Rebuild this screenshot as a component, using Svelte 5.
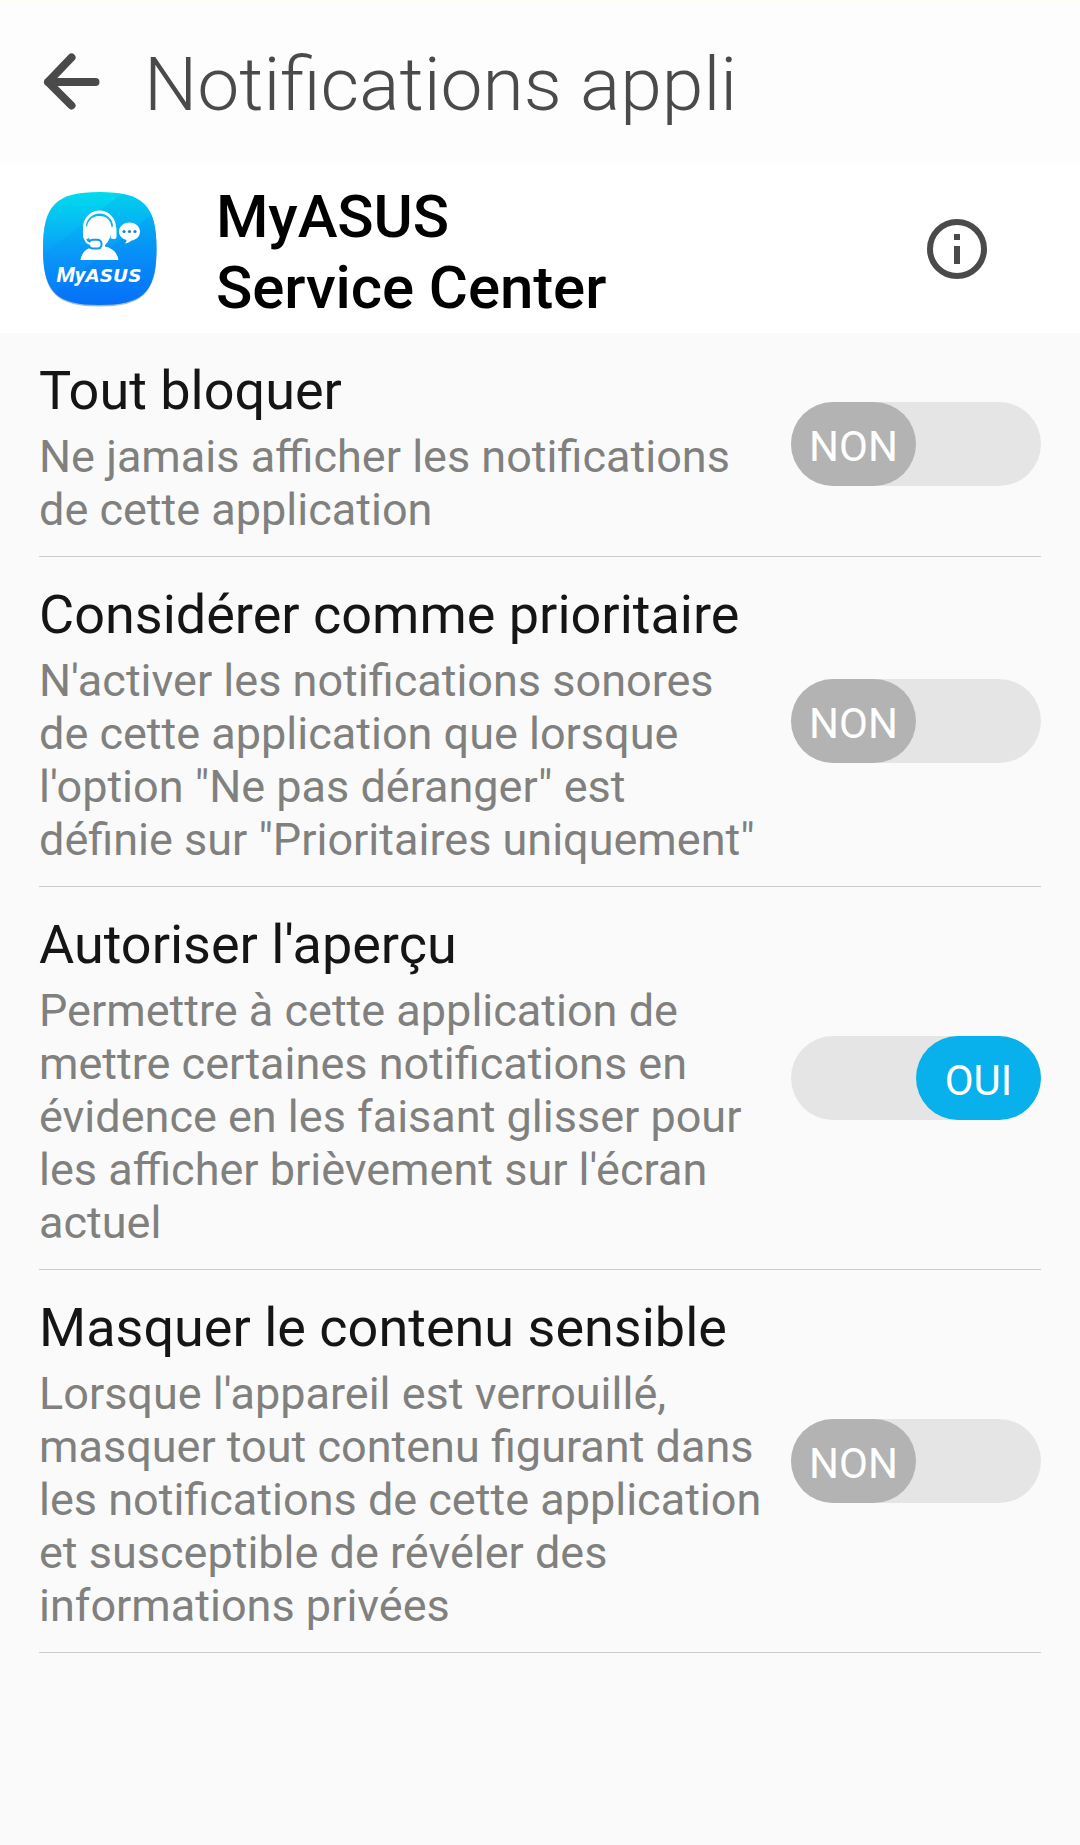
<script>
  let items = $state([
    {
      title: 'Tout bloquer',
      lines: ['Ne jamais afficher les notifications', 'de cette application'],
      on: false
    },
    {
      title: 'Considérer comme prioritaire',
      lines: [
        "N'activer les notifications sonores",
        'de cette application que lorsque',
        'l\'option "Ne pas déranger" est',
        'définie sur "Prioritaires uniquement"'
      ],
      on: false
    },
    {
      title: "Autoriser l'aperçu",
      lines: [
        'Permettre à cette application de',
        'mettre certaines notifications en',
        'évidence en les faisant glisser pour',
        "les afficher brièvement sur l'écran",
        'actuel'
      ],
      on: true
    },
    {
      title: 'Masquer le contenu sensible',
      lines: [
        "Lorsque l'appareil est verrouillé,",
        'masquer tout contenu figurant dans',
        'les notifications de cette application',
        'et susceptible de révéler des',
        'informations privées'
      ],
      on: false
    }
  ]);
</script>

<div class="screen">
  <header class="bar">
    <svg class="back" width="60" height="60" viewBox="0 0 60 60" aria-hidden="true">
      <path d="M31.5 6.500 8 31 31.500 54.500M8 31H55.500" />
    </svg>
    <h1>Notifications appli</h1>
  </header>

  <section class="app">
    <svg class="logo" width="124" height="124" viewBox="0 0 124 124" aria-hidden="true">
      <defs>
        <linearGradient id="sky" x1="0" y1="0" x2="0" y2="1">
          <stop offset="0" stop-color="#00dcec" />
          <stop offset="0.28" stop-color="#06bcf4" />
          <stop offset="0.6" stop-color="#0a98f8" />
          <stop offset="1" stop-color="#0874fb" />
        </linearGradient>
        <clipPath id="tile">
          <path d="M62.500 5C106 5 119.500 18 119.500 61.500S106 118 62.500 118 6 105 6 61.500 19 5 62.500 5Z" />
        </clipPath>
      </defs>
      <path
        d="M62.500 6.500C106 6.500 119.500 19 119.500 62.500S106 119.500 62.500 119.500 6 106 6 62.500 19 6.500 62.500 6.500Z"
        fill="#6f9fc4"
        opacity="0.7"
      />
      <path
        d="M62.500 5C106 5 119.500 18 119.500 61.500S106 118 62.500 118 6 105 6 61.500 19 5 62.500 5Z"
        fill="url(#sky)"
      />
      <g clip-path="url(#tile)">
        <path d="M0 72 78 12 124 -20V124H0Z" fill="#0878f8" opacity="0.13" />
        <path d="M0 120 124 20V124H0Z" fill="#0058f0" opacity="0.13" />
      </g>
      <path
        d="M62.500 29c-8 0-12.500 5.500-12.500 12.500 0 7 3 13 7 16.500v1.500c-7 1.500-12.500 6-13.500 13.500H81.500c-1-7.500-6.500-12-13.500-13.500V58c4-3.500 6.500-9.500 6.500-16.500C74.500 34.500 70.500 29 62.500 29Z"
        fill="#fff"
      />
      <path d="M47.500 44V40a15 15 0 0 1 30 0V44" fill="none" stroke="#fff" stroke-width="2.800" />
      <rect x="46" y="39.500" width="6" height="12.500" rx="2.500" fill="#fff" />
      <rect x="73.500" y="39.500" width="6" height="12.500" rx="2.500" fill="#fff" />
      <rect x="51" y="51.800" width="14.500" height="10.800" rx="5" fill="#0a9df5" />
      <path d="M48 50c0 4.500 3 7 7 7" fill="none" stroke="#fff" stroke-width="2.200" />
      <rect x="53" y="53.800" width="10.500" height="6.800" rx="3" fill="#fff" />
      <path
        d="M92.500 35.500c6 0 10.500 4 10.500 9s-4 8.500-8.500 9c-1 1-3 2.500-6.500 3 1-1.500 1.500-2 1.500-3.500-4-1-7.500-4-7.500-8.500 0-5 4.500-9 10.500-9Z"
        fill="#fff"
      />
      <g fill="#1388d8">
        <circle cx="87" cy="44.500" r="1.600" />
        <circle cx="92.500" cy="44.500" r="1.600" />
        <circle cx="98" cy="44.500" r="1.600" />
      </g>
      <text class="wordmark" x="19.500" y="94.500" textLength="85" lengthAdjust="spacingAndGlyphs"
        ><tspan class="my">My</tspan><tspan class="asus">ASUS</tspan></text
      >
    </svg>
    <div class="name">MyASUS<br />Service Center</div>
    <svg class="info" width="60" height="60" viewBox="0 0 60 60" aria-hidden="true">
      <circle cx="30" cy="30" r="27" />
      <path d="M30 15v6M30 27v18" />
    </svg>
  </section>

  <main>
    {#each items as item}
      <div class="row">
        <div class="text">
          <h2>{item.title}</h2>
          <p>
            {#each item.lines as line}
              <span>{line}</span>
            {/each}
          </p>
        </div>
        <button
          class="toggle"
          class:on={item.on}
          role="switch"
          aria-checked={item.on}
          aria-label={item.title}
          onclick={() => (item.on = !item.on)}
        >
          <span class="thumb">{item.on ? 'OUI' : 'NON'}</span>
        </button>
      </div>
    {/each}
  </main>
</div>

<style>
  :global(body) {
    margin: 0;
    background: #fafafa;
  }
  .screen {
    box-sizing: border-box;
    width: 1080px;
    height: 1845px;
    background: #fafafa;
    font-family: Roboto, 'Liberation Sans', sans-serif;
    overflow: hidden;
  }
  .bar {
    box-sizing: border-box;
    display: flex;
    align-items: center;
    gap: 44px;
    height: 165px;
    padding: 0 0 3px 40px;
    border-top: 4px solid #fffdf8;
    background: #fdfdfd;
  }
  .back {
    flex: none;
    margin-bottom: 5px;
    fill: none;
    stroke: #4a4a4a;
    stroke-width: 8;
    stroke-linecap: round;
    stroke-linejoin: round;
  }
  h1 {
    margin: 2px 0 0;
    color: #4a4a4a;
    font-size: 75px;
    font-weight: 300;
    line-height: 88px;
    white-space: nowrap;
  }
  .app {
    box-sizing: border-box;
    display: flex;
    align-items: center;
    height: 168px;
    padding: 0 93px 0 37px;
    background: #fff;
  }
  .logo {
    flex: none;
  }
  .wordmark {
    fill: #fff;
  }
  .my {
    font: italic 700 21px Roboto, sans-serif;
  }
  .asus {
    font: italic 700 18px 'DejaVu Sans', sans-serif;
  }
  .name {
    flex: 1;
    margin-left: 55px;
    padding-top: 5px;
    color: #000;
    font-size: 60px;
    font-weight: 500;
    letter-spacing: -0.1px;
    line-height: 71px;
  }
  .info {
    flex: none;
    fill: none;
    stroke: #4a4a4a;
    stroke-width: 6;
  }
  .row {
    box-sizing: border-box;
    display: flex;
    align-items: center;
    justify-content: space-between;
    margin: 0 39px;
    border-bottom: 1px solid #cbcbcb;
  }
  .text {
    padding: 25px 0 20px;
  }
  h2 {
    margin: 0 0 6px;
    color: #151515;
    font-size: 54px;
    font-weight: 400;
    line-height: 66px;
    white-space: nowrap;
  }
  p {
    margin: 0;
    color: #80807e;
    font-size: 45px;
    line-height: 53px;
  }
  p span {
    display: block;
    white-space: nowrap;
  }
  .toggle {
    display: flex;
    flex: none;
    width: 250px;
    height: 84px;
    margin: 0 0 1px;
    padding: 0;
    border: 0;
    border-radius: 42px;
    background: #e5e5e5;
  }
  .thumb {
    box-sizing: border-box;
    width: 125px;
    height: 84px;
    padding-top: 5px;
    border-radius: 42px;
    background: #b3b3b3;
    color: #fff;
    font-family: Roboto, 'Liberation Sans', sans-serif;
    font-size: 42px;
    line-height: 80px;
    text-align: center;
  }
  .toggle.on {
    justify-content: flex-end;
  }
  .on .thumb {
    background: #08b0ec;
  }
</style>
